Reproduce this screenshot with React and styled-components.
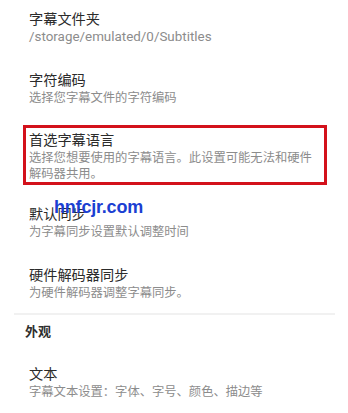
import styled, { createGlobalStyle } from "styled-components";

const GlobalStyle = createGlobalStyle`
  html, body {
    margin: 0;
    padding: 0;
    background: #ffffff;
  }
  body {
    font-family: Roboto, "Noto Sans CJK SC", sans-serif;
  }
`;

const Page = styled.div`
  position: relative;
  width: 348px;
  height: 413px;
  overflow: hidden;
  background: #ffffff;
`;

const Section = styled.div`
  display: flex;
  flex-direction: column;
  gap: 4px;
`;

const Item = styled.div`
  padding: 9px 22px 12px 29px;
  display: flex;
  flex-direction: column;
  ${({ $highlighted }) =>
    $highlighted &&
    `
    margin: 3px 21px 6px 23px;
    padding: 2px 4px 0 3px;
    border: 3px solid #d3111b;
  `}
`;

const Title = styled.div`
  font-family: Roboto, "Noto Sans CJK SC", sans-serif;
  font-size: 14.2px;
  line-height: 20px;
  color: #2b2b2b;
`;

const Summary = styled.div`
  font-family: Roboto, "Noto Sans CJK SC", sans-serif;
  font-size: 12.3px;
  line-height: 16px;
  color: #8c8c8c;
`;

const Path = styled.span`
  font-size: 13.4px;
`;

const Divider = styled.div`
  height: 2px;
  margin: 0 13px 0 14px;
  background: #f1f1f1;
`;

const Header = styled.div`
  padding: 7px 25px 13px;
  font-family: Roboto, "Noto Sans CJK SC", sans-serif;
  font-size: 13px;
  font-weight: 700;
  line-height: 20px;
  color: #2e2e2e;
`;

const Watermark = styled.div`
  position: absolute;
  left: 54px;
  top: 196px;
  font-family: "Liberation Sans", Arial, sans-serif;
  font-size: 18px;
  font-weight: 700;
  line-height: 22px;
  color: #1b3fd2;
  letter-spacing: -0.2px;
`;

const subtitleItems = [
  { title: "字幕文件夹", summary: <Path>/storage/emulated/0/Subtitles</Path> },
  { title: "字符编码", summary: "选择您字幕文件的字符编码" },
  {
    title: "首选字幕语言",
    summary: "选择您想要使用的字幕语言。此设置可能无法和硬件解码器共用。",
    highlighted: true,
  },
  { title: "默认同步", summary: "为字幕同步设置默认调整时间" },
  { title: "硬件解码器同步", summary: "为硬件解码器调整字幕同步。" },
];

export default function App() {
  return (
    <Page>
      <GlobalStyle />
      <Section>
        {subtitleItems.map((it) => (
          <Item key={it.title} $highlighted={it.highlighted}>
            <Title>{it.title}</Title>
            <Summary>{it.summary}</Summary>
          </Item>
        ))}
      </Section>
      <Divider />
      <Header>外观</Header>
      <Item>
        <Title>文本</Title>
        <Summary>字幕文本设置：字体、字号、颜色、描边等</Summary>
      </Item>
      <Watermark>hnfcjr.com</Watermark>
    </Page>
  );
}
